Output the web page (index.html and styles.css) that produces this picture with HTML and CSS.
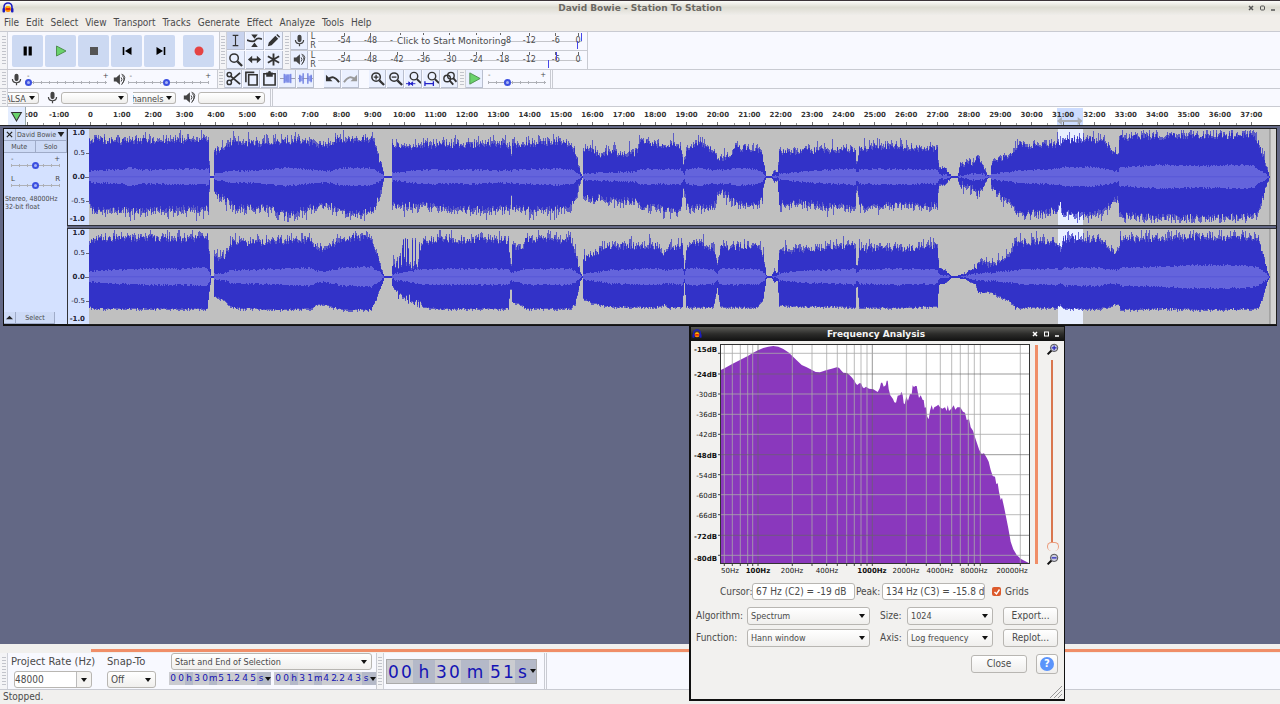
FILE: index.html
```html
<!DOCTYPE html>
<html lang="en">
<head>
<meta charset="utf-8">
<title>David Bowie - Station To Station</title>
<link rel="stylesheet" href="styles.css">
</head>
<body>
<svg class="defs" aria-hidden="true">
  <symbol id="logo" viewBox="0 0 12 12"><path d="M2 8V5a4 4 0 0 1 8 0v3" fill="none" stroke="#1c1cc0" stroke-width="1.6"/><circle cx="6" cy="7" r="3" fill="#f80"/><path d="M4 8l1-2 1 2 1-2 1 2" stroke="#d11" fill="none"/><path d="M4.500 5h3" stroke="#ffe000"/><rect x="0.500" y="6" width="2.500" height="4.500" rx="1" fill="#1c1cc0"/><rect x="9" y="6" width="2.500" height="4.500" rx="1" fill="#1c1cc0"/></symbol>
  <symbol id="mic" viewBox="0 0 16 16"><rect x="5.500" y="1" width="5" height="9" rx="2.500" fill="#444"/><path d="M3 7.500c0 6 10 6 10 0M8 12v3" fill="none" stroke="#444" stroke-width="1.500"/></symbol>
  <symbol id="spk" viewBox="0 0 16 16"><path d="M1 5.500h3L8.500 1.500v13L4 10.500H1z" fill="#444"/><path d="M10 5.500q2 2.500 0 5M11.500 3q4 5 0 10M10.500 1.500q8 2 0 13" fill="none" stroke="#444" stroke-width="1.200"/></symbol>
  <symbol id="mag" viewBox="0 0 16 16"><circle cx="6.500" cy="6.500" r="4.500" fill="none" stroke="#333" stroke-width="1.600"/><path d="M10 10l5 5" stroke="#333" stroke-width="2.400"/></symbol>
</svg>

<header class="titlebar">
  <svg class="logo"><use href="#logo"/></svg>
  <h1>David Bowie - Station To Station</h1>
  <span class="winbtns"><svg viewBox="0 0 30 8"><path d="M2 2l4 4M6 2L2 6" stroke="#555" stroke-width="1.500"/><rect x="13.500" y="2" width="4" height="4" rx="1" fill="none" stroke="#555"/><path d="M24 6h4" stroke="#555" stroke-width="1.500"/></svg></span>
</header>
<nav class="menu">
  <a href="#">File</a><a href="#">Edit</a><a href="#">Select</a><a href="#">View</a><a href="#">Transport</a><a href="#">Tracks</a><a href="#">Generate</a><a href="#">Effect</a><a href="#">Analyze</a><a href="#">Tools</a><a href="#">Help</a>
</nav>

<div class="bar bar1">
  <i class="grip"></i>
  <div class="transport">
    <button aria-label="Pause"><svg viewBox="0 0 16 16"><path d="M5.200 3.500v9M10.200 3.500v9" stroke="#000" stroke-width="3.200"/></svg></button>
    <button aria-label="Play"><svg viewBox="0 0 16 16"><path d="M3.500 3l9.500 5-9.500 5z" fill="#69d36b" stroke="#4f8f50"/></svg></button>
    <button aria-label="Stop"><svg viewBox="0 0 16 16"><path d="M4 4h8v8H4z" fill="#555"/></svg></button>
    <button aria-label="Skip to start"><svg viewBox="0 0 16 16"><path d="M4.500 4v8" stroke="#000" stroke-width="1.600"/><path d="M12.500 4v8L6 8z"/></svg></button>
    <button aria-label="Skip to end"><svg viewBox="0 0 16 16"><path d="M12.500 4v8" stroke="#000" stroke-width="1.600"/><path d="M4.500 4v8L11 8z"/></svg></button>
    <button class="rec" aria-label="Record"><svg viewBox="0 0 16 16"><circle cx="8" cy="8" r="4.500" fill="#e54343"/></svg></button>
  </div>
  <i class="grip edge"></i>
  <div class="tools">
    <button class="on" aria-label="Selection tool"><svg viewBox="0 0 16 16"><path d="M5 2.500h2.500L8 3.500l.5-1H11M5 13.500h2.500L8 12.500l.5 1H11M8 3v10" fill="none" stroke="#333" stroke-width="1.200"/></svg></button>
    <button aria-label="Envelope tool"><svg viewBox="0 0 16 16"><path d="M0 7.500q7 3 9 0t7-1" fill="none" stroke="#333" stroke-width="1.800"/><path d="M4.500 1.500h7L8 6zM4.500 15h7L8 10z" fill="#333"/></svg></button>
    <button aria-label="Draw tool"><svg viewBox="0 0 16 16"><path d="M2 14l1-4 7-7 3 3-7 7zM11 2l1-1 3 3-1 1z" fill="#333"/></svg></button>
    <button aria-label="Zoom tool"><svg viewBox="0 0 16 16"><use href="#mag"/></svg></button>
    <button aria-label="Time shift tool"><svg viewBox="0 0 16 16"><path d="M1 8l4.500-4v3h5V4L15 8l-4.500 4V9h-5v3z" fill="#333"/></svg></button>
    <button aria-label="Multi tool"><svg viewBox="0 0 16 16"><path d="M8 1.500v13M2 4.500l12 7M14 4.500l-12 7" stroke="#333" stroke-width="2"/></svg></button>
  </div>
  <i class="grip"></i>
  <div class="meters">
    <div class="meter">
      <button aria-label="Recording meter"><svg><use href="#mic"/></svg></button><span class="lr">L<br>R</span>
      <div class="scale"><span>-54</span><span>-48</span><span class="first">-</span><span></span><span></span><span></span><span class="last">8</span><span>-12</span><span>-6</span><span>0</span><b class="peak p1"></b><em>Click to Start Monitoring</em></div>
    </div>
    <div class="meter">
      <button aria-label="Playback meter"><svg><use href="#spk"/></svg></button><span class="lr">L<br>R</span>
      <div class="scale"><span>-54</span><span>-48</span><span>-42</span><span>-36</span><span>-30</span><span>-24</span><span>-18</span><span>-12</span><span>-6</span><span>0</span><b class="peak p2"></b></div>
    </div>
  </div>
</div>

<div class="bar bar2">
  <i class="grip"></i>
  <div class="mixer">
    <svg class="ic"><use href="#mic"/></svg>
    <label class="sl"><i>-</i><i>+</i><input type="range" aria-label="Recording volume" value="0"></label>
    <svg class="ic"><use href="#spk"/></svg>
    <label class="sl"><i>-</i><i>+</i><input type="range" aria-label="Playback volume" value="48"></label>
  </div>
  <i class="grip edge"></i>
  <div class="edit">
    <button aria-label="Cut"><svg viewBox="0 0 16 16"><circle cx="3.500" cy="3.800" r="2.300" fill="none" stroke="#333" stroke-width="1.600"/><circle cx="3.500" cy="12.200" r="2.300" fill="none" stroke="#333" stroke-width="1.600"/><path d="M5 5.500l10 8.500M5 10.500L15 2" stroke="#333" stroke-width="2"/></svg></button>
    <button aria-label="Copy"><svg viewBox="0 0 16 16"><path d="M2 12V1.500h9M5 4h9v11H5z" fill="none" stroke="#333" stroke-width="1.700"/></svg></button>
    <button aria-label="Paste"><svg viewBox="0 0 16 16"><path d="M2 3h12v12H2z" fill="none" stroke="#333" stroke-width="1.700"/><path d="M4.500 1.500h2a1.500 1.500 0 0 1 3 0h2V6h-7z" fill="#333"/></svg></button>
    <button aria-label="Trim"><svg viewBox="0 0 16 16"><path d="M0 8h16" stroke="#99a"/><path d="M4 3.500h8v9H4z" fill="#94a2ee"/><path d="M4.500 3v10M6.500 5v6M8.500 4v8M11.500 3v10" stroke="#6c7ce0"/></svg></button>
    <button aria-label="Silence"><svg viewBox="0 0 16 16"><path d="M0 8h16" stroke="#99a"/><path d="M1 5h4v6H1zM11 5h4v6h-4z" fill="#94a2ee"/><path d="M2 4v8M5.500 2.500v11M10.500 2.500v11M14 4v8" stroke="#6c7ce0" stroke-width="1.400"/></svg></button>
    <button class="gap" aria-label="Undo"><svg viewBox="0 0 16 16"><path d="M3 9q6-6 12 3" fill="none" stroke="#333" stroke-width="2"/><path d="M1 4v7h7z" fill="#333"/></svg></button>
    <button aria-label="Redo"><svg viewBox="0 0 16 16"><path d="M13 9Q7 3 1 12" fill="none" stroke="#999" stroke-width="2"/><path d="M15 4v7H8z" fill="#999"/></svg></button>
    <button class="gap" aria-label="Zoom in"><svg viewBox="0 0 16 16"><use href="#mag"/><path d="M4 6.500h5M6.500 4v5" stroke="#333" stroke-width="1.400"/></svg></button>
    <button aria-label="Zoom out"><svg viewBox="0 0 16 16"><use href="#mag"/><path d="M4 6.500h5" stroke="#333" stroke-width="1.400"/></svg></button>
    <button aria-label="Fit selection"><svg viewBox="0 0 16 16"><circle cx="8.500" cy="5.500" r="4" fill="none" stroke="#333" stroke-width="1.500"/><path d="M11.500 8.500L16 13" stroke="#333" stroke-width="2"/><path d="M0 13.500h10M3 11.500l2 2-2 2zM7 11.500l-2 2 2 2z" fill="#2222c8" stroke="#2222c8"/></svg></button>
    <button aria-label="Fit project"><svg viewBox="0 0 16 16"><circle cx="8.500" cy="5.500" r="4" fill="none" stroke="#333" stroke-width="1.500"/><path d="M11.500 8.500L16 13" stroke="#333" stroke-width="2"/><path d="M1 13.500h9M1 11v5M10 11v5" fill="none" stroke="#2222c8" stroke-width="1.400"/></svg></button>
    <button aria-label="Zoom toggle"><svg viewBox="0 0 16 16"><circle cx="9.500" cy="5" r="3.500" fill="none" stroke="#333" stroke-width="1.500"/><circle cx="5.500" cy="8" r="3.500" fill="none" stroke="#333" stroke-width="1.500"/><path d="M8 10l4 4.500M12 7.500l3.500 4" stroke="#333" stroke-width="2"/></svg></button>
  </div>
  <i class="grip"></i>
  <div class="edit"><button aria-label="Play at speed"><svg viewBox="0 0 16 16"><path d="M3 2l11 6-11 6z" fill="#69d36b" stroke="#4f8f50"/></svg></button></div>
  <label class="sl speed"><i>-</i><i>+</i><input type="range" aria-label="Playback speed" value="32"></label>
  <i class="end"></i>
</div>

<div class="bar bar3">
  <i class="grip"></i>
  <label class="combo cut w-host"><select aria-label="Audio host"><option>ALSA</option></select></label>
  <svg class="ic"><use href="#mic"/></svg>
  <label class="combo w-dev"><select aria-label="Recording device"><option></option></select></label>
  <label class="combo cut w-chan"><select aria-label="Recording channels"><option>Channels</option></select></label>
  <svg class="ic"><use href="#spk"/></svg>
  <label class="combo w-dev"><select aria-label="Playback device"><option></option></select></label>
  <i class="end"></i>
</div>

<div class="timeline">
  <div class="ticks" id="ticks"></div>
  <button class="pin" aria-label="Pinned play head"><svg viewBox="0 0 16 16"><path d="M2 3h12L8 13.500z" fill="#69d36b" stroke="#333" stroke-width="1.300"/></svg></button>
  <div class="range"><svg viewBox="0 0 26 8"><path d="M0 4l5-4v3h16V0l5 4-5 4V5H5v3z" fill="#a9adb5"/></svg></div>
</div>

<main class="desk">
  <section class="track">
    <aside class="tcp">
      <div class="row"><button class="x" aria-label="Close track"><svg viewBox="0 0 8 8"><path d="M1 1l6 6M7 1L1 7" stroke="#222" stroke-width="1.400"/></svg></button><button class="name">David Bowie<svg viewBox="0 0 8 6"><path d="M0 0h8L4 6z" fill="#222"/></svg></button></div>
      <div class="row"><button>Mute</button><button>Solo</button></div>
      <label class="sl"><i>-</i><i>+</i><input type="range" aria-label="Gain" value="49"></label>
      <label class="sl"><i>L</i><i>R</i><input type="range" aria-label="Pan" value="49"></label>
      <p>Stereo, 48000Hz<br>32-bit float</p>
      <div class="row foot"><button class="x" aria-label="Collapse"><svg viewBox="0 0 8 6"><path d="M0 5h8L4 1z" fill="#222"/></svg></button><button class="sel">Select</button></div>
    </aside>
    <div class="channels">
      <div class="chan">
        <div class="vr"><b>1.0</b><span>0.5</span><b>0.0</b><span>-0.5</span><b>-1.0</b></div>
        <svg class="wave" data-ch="0" viewBox="89 129 1187 96" preserveAspectRatio="none"></svg>
      </div>
      <div class="chan">
        <div class="vr"><b>1.0</b><span>0.5</span><b>0.0</b><span>-0.5</span><b>-1.0</b></div>
        <svg class="wave" data-ch="1" viewBox="89 229 1187 96" preserveAspectRatio="none"></svg>
      </div>
    </div>
  </section>
</main>

<div class="hscroll"><i></i></div>
<footer class="selbar">
  <i class="grip"></i>
  <div class="field rate"><label for="rate">Project Rate (Hz)</label><div class="combo entry"><input id="rate" value="48000"></div></div>
  <div class="field snap"><label for="snap">Snap-To</label><div class="combo"><select id="snap"><option>Off</option></select></div></div>
  <div class="field times">
    <div class="combo"><select aria-label="Selection mode"><option>Start and End of Selection</option></select></div>
    <div class="pair">
      <div class="time"><b>0</b><b>0</b><i>h</i><b>3</b><b>0</b><i>m</i><b>5</b><b>1</b><u>.</u><b>2</b><b>4</b><b>5</b><i>s</i></div>
      <div class="time"><b>0</b><b>0</b><i>h</i><b>3</b><b>1</b><i>m</i><b>4</b><b>2</b><u>.</u><b>2</b><b>4</b><b>3</b><i>s</i></div>
    </div>
  </div>
  <i class="grip edge"></i>
  <div class="time big"><b>0</b><b>0</b><i>h</i><b>3</b><b>0</b><i class="m">m</i><b>5</b><b>1</b><i class="s">s</i></div>
  <i class="end"></i>
</footer>
<div class="status">Stopped.</div>

<section class="dialog" role="dialog" aria-labelledby="fa">
  <header><svg class="logo"><use href="#logo"/></svg><h2 id="fa">Frequency Analysis</h2><span class="winbtns"><svg viewBox="0 0 30 8"><path d="M2 2l4 4M6 2L2 6" stroke="#fff" stroke-width="1.500"/><rect x="13.500" y="2" width="4" height="4" fill="none" stroke="#fff"/><path d="M24 6h4" stroke="#fff" stroke-width="1.500"/></svg></span></header>
  <div class="plot">
    <svg class="chart" id="chart" viewBox="691 341 340 236"></svg>
    <i class="vbar"></i>
    <div class="vzoom">
      <svg viewBox="0 0 16 16"><path d="M8 8l-6 6" stroke="#111" stroke-width="2.600"/><circle cx="10" cy="6" r="4.500" fill="#ccd" stroke="#333"/><path d="M7 6h6M10 3v6" stroke="#22b" stroke-width="1.500"/></svg>
      <i class="vline"></i>
      <svg viewBox="0 0 16 16"><path d="M8 8l-6 6" stroke="#111" stroke-width="2.600"/><circle cx="10" cy="6" r="4.500" fill="#ccd" stroke="#333"/><path d="M7 6h6" stroke="#22b" stroke-width="1.500"/></svg>
    </div>
  </div>
  <div class="readout">
    <label for="cur">Cursor:</label><input id="cur" value="67 Hz (C2) = -19 dB" readonly>
    <label for="peak">Peak:</label><input id="peak" value="134 Hz (C3) = -15.8 d" readonly>
    <label class="chk"><input type="checkbox" checked><svg viewBox="0 0 8 8"><path d="M1.500 4l2 2 3-4.500" fill="none" stroke="#fff" stroke-width="1.400"/></svg>Grids</label>
  </div>
  <div class="form">
    <label for="alg">Algorithm:</label><div class="combo"><select id="alg"><option>Spectrum</option></select></div>
    <label for="size">Size:</label><div class="combo"><select id="size"><option>1024</option></select></div>
    <button>Export...</button>
    <label for="fn">Function:</label><div class="combo"><select id="fn"><option>Hann window</option></select></div>
    <label for="axis">Axis:</label><div class="combo"><select id="axis"><option>Log frequency</option></select></div>
    <button>Replot...</button>
  </div>
  <div class="actions"><button class="close">Close</button><button class="help" aria-label="Help"><span>?</span></button></div>
  <svg class="size" viewBox="0 0 12 12"><path d="M0 12L12 0M4 12l8-8M8 12l4-4" stroke="#999"/></svg>
</section>
<script src="app.js"></script>
</body>
</html>
```

FILE: styles.css
```css
* { box-sizing: border-box; }
body {
  margin: 0; min-height: 100vh; display: flex; flex-direction: column;
  background: #f1f0ee; color: #4a4a4a; position: relative; overflow: hidden;
  font-family: "DejaVu Sans Condensed", "DejaVu Sans", sans-serif; font-size: 10px; line-height: 12px;
}
button, input, select { font: inherit; color: inherit; margin: 0; padding: 0; border: 0; background: none; border-radius: 0; }
h1, h2, p { margin: 0; }
i, em { font-style: normal; }
svg { display: block; flex: none; }
.defs { position: absolute; width: 0; height: 0; }
.logo { width: 12px; height: 12px; }

.titlebar {
  height: 15px; display: grid; grid-template-columns: 40px 1fr 40px; align-items: center;
  border-top: 1px solid #3b3338; background: linear-gradient(#fcfcf9 0, #dddcd2 45%, #efedea);
}
.titlebar .logo { margin-left: 2px; }
.titlebar h1, .dialog h2 { font: bold 9px/13px "DejaVu Sans", sans-serif; text-align: center; color: #6b6964; }
.winbtns { padding-right: 3px; }
.winbtns svg { width: 30px; height: 8px; margin-left: auto; }
.menu { display: flex; gap: 7px; height: 16px; padding: 2px 4px 0; background: #f1eeea; }
.menu a { color: #4a4a4a; text-decoration: none; }

.bar { display: flex; align-items: stretch; background: #f8f9ff; border-top: 1px solid #c9cbd2; }
.grip { flex: none; width: 8px; border-right: 1px solid #cfd1d8; background: repeating-linear-gradient(#c2c4cb 0 1px, transparent 1px 3px) center / 4px 80% no-repeat #f4f4f6; }
.edge { border-left: 1px solid #c9cbd2; }
.end { flex: none; width: 3px; border: solid #c9cbd2; border-width: 0 1px; }

.bar1 { height: 38px; }
.transport { display: flex; align-items: center; gap: 2px; padding: 0 5px 0 4px; }
.transport button { width: 31px; height: 32px; border-radius: 2px; background: #ccd9f2; display: grid; place-items: center; }
.transport svg { width: 16px; height: 16px; }
.transport .rec { margin-left: 6px; }
.tools { display: grid; grid-template-columns: repeat(3, 18px); gap: 1px; }
.tools button, .meter button, .edit button { background: #eaf0ff; border: solid #b9bfcf; border-width: 0 1px 1px 0; display: grid; place-items: center; }
.tools button.on { background: #c8d3ee; }
.tools svg { width: 15px; height: 15px; }
.meters { flex: none; width: 297px; display: grid; grid-template-rows: 1fr 1fr; border-right: 1px solid #c9cbd2; }
.meter { display: grid; grid-template-columns: 17px 10px 264px; border-bottom: 1px solid #c9cbd2; }
.meter button { width: 17px; }
.meter svg { width: 13px; height: 13px; }
.lr { font: 8px/9px "DejaVu Sans", sans-serif; text-align: center; }
.scale {
  position: relative; display: grid; grid-template-columns: repeat(9, 1fr) 18px; align-items: center; text-align: center;
  padding-left: 13px; margin-right: -5px; font: 8px/10px "DejaVu Sans", sans-serif;
  background: linear-gradient(#c4c5ca, #c4c5ca) 0 50% / 264px 1px no-repeat;
}
.scale span { min-height: 10px; }
.scale span::before { content: ""; display: block; width: 1px; height: 3px; margin: -3px auto 0; background: #666; }
.scale .first { text-align: left; padding-left: 6px; }
.scale .last { text-align: right; padding-right: 5px; }
.scale em { position: absolute; left: 79px; top: 3px; background: #f8f9ff; font-size: 9px; line-height: 12px; white-space: nowrap; }
.peak { position: absolute; width: 1px; height: 8px; background: #4646e8; }
.peak::after { content: ""; position: absolute; width: 1px; height: 8px; background: #4646e8; left: -4px; top: 8px; }
.p1 { left: 263px; top: 1px; } .p2 { left: 238px; top: 1px; } .p2::after { left: -8px; }

.bar2 { height: 19px; }
.mixer { display: flex; align-items: center; gap: 4px; padding: 0 6px 0 2px; width: 209px; }
.ic { width: 13px; height: 13px; }
.sl { flex: 1; display: grid; grid-template-columns: 1fr 1fr; font: 7px/6px "DejaVu Sans", sans-serif; }
.sl i:nth-child(2) { text-align: right; }
.sl input {
  appearance: none; grid-column: 1 / 3; width: 100%; height: 7px;
  background: linear-gradient(#aeb0b6, #aeb0b6) 0 3px / 100% 1px no-repeat, repeating-linear-gradient(90deg, #aeb0b6 0 1px, transparent 1px 8px) 0 2px / 100% 3px no-repeat;
}
.mixer .sl input { margin-left: -2px; }
.sl input::-webkit-slider-thumb { appearance: none; width: 7px; height: 7px; border: 2px solid #3c50e0; border-radius: 50%; background: #a8b4f4; }
.edit { display: flex; gap: 1px; }
.edit button { width: 17px; }
.edit svg { width: 15px; height: 15px; }
.edit .gap { margin-left: 9px; }
.speed { flex: none; width: 58px; margin: 2px 4px 2px 5px; }

.bar3 { height: 19px; align-items: center; border-bottom: 1px solid #c9cbd2; }
.bar3 .grip, .bar3 .end { align-self: stretch; }
.bar3 .combo { height: 12px; font-size: 9px; }
.bar3 .ic { margin: 0 2px 0 7px; }
.bar3 .end { margin-left: 5px; }
.combo { position: relative; display: block; border: 1px solid #b8b6b2; border-radius: 3px; background: linear-gradient(#fff, #f0efed); }
.combo::after { content: ""; position: absolute; right: 4px; top: 50%; margin-top: -2px; border: 3px solid transparent; border-top: 4px solid #111; border-bottom: 0; pointer-events: none; }
.combo select, .combo input { appearance: none; display: block; width: 100%; height: 100%; padding-left: 3px; outline: 0; }
.cut { overflow: hidden; border-left: 0; border-radius: 0 3px 3px 0; }
.cut select { margin-left: -6px; }
.w-host { width: 31px; } .w-dev { width: 67px; } .w-chan { width: 43px; margin-left: 5px; }
.w-chan select { margin-left: -10px; width: 50px; }
.bar3 .w-dev::after, .bar3 .cut::after { right: 3px; }

.timeline { position: relative; height: 19px; background: #fff; border-bottom: 1px solid #222; padding: 0 13px 0 12px; }
.ticks { position: relative; z-index: 1; height: 100%; display: grid; grid-template-columns: repeat(40, 1fr); font: bold 7px/16px "DejaVu Sans", sans-serif; color: #333; text-align: center; }
.ticks span { white-space: nowrap; background: linear-gradient(#777, #777) 50% 100% / 1px 3px no-repeat, linear-gradient(#999, #999) 0 100% / 1px 2px no-repeat; }
.pin { position: absolute; z-index: 2; left: 8px; top: 0; width: 18px; height: 18px; background: #e4edff; border-right: 1px solid #9aa; display: grid; place-items: center; }
.pin svg { width: 13px; height: 13px; }
.range { position: absolute; left: 82.600%; width: 2%; top: 1px; bottom: 0; background: #ccdcff; display: flex; align-items: flex-end; }
.range svg { width: 100%; height: 8px; }

.desk { flex: 1; background: #636885; padding: 2px 3px; }
.track { display: flex; height: 198px; border: 1px solid #111; border-width: 1px 1px 2px 1px; background: #d4e1ff; }
.tcp { width: 64px; display: flex; flex-direction: column; border-right: 1px solid #778; font-size: 7px; line-height: 8px; }
.tcp .row { display: flex; }
.tcp button { flex: 1; height: 12px; display: flex; align-items: center; justify-content: center; gap: 1px; border: solid #9fabc8; border-width: 0 1px 1px 0; background: #cddaf6; white-space: nowrap; }
.tcp .x { flex: none; width: 12px; }
.tcp .x svg { width: 7px; height: 7px; }
.tcp .name svg { width: 8px; height: 5px; }
.tcp .sl { flex: none; margin: 3px 7px 4px; }
.tcp p { padding: 2px 0 0 1px; white-space: nowrap; }
.tcp .foot { margin-top: auto; }
.tcp .sel { flex: none; width: 39px; }
.channels { flex: 1; display: grid; grid-template-rows: 1fr 1fr; gap: 4px; background: #636885; }
.chan { display: flex; background: #d4e1ff; outline: 1px solid #222c; min-height: 0; }
.vr { width: 21px; padding-right: 4px; display: grid; grid-template-rows: 8px 32px 16px 32px 4px; align-items: center; justify-items: end; font: 7px/8px "DejaVu Sans", sans-serif; color: #223; background: linear-gradient(90deg, transparent 17px, #667 17px) 0 48px / 100% 1px no-repeat, linear-gradient(90deg, transparent 18px, #667 18px) 0 24px / 100% 1px no-repeat, linear-gradient(90deg, transparent 18px, #667 18px) 0 72px / 100% 1px no-repeat; }
.wave { flex: 1; min-width: 0; height: 100%; background: #c0c0c0; shape-rendering: crispEdges; }

.hscroll { height: 9px; padding: 5px 0 0 91px; background: #f1f0ee; }
.hscroll i { display: block; height: 3px; background: #f08e68; }
.selbar { height: 37px; display: flex; background: #f8f9ff; border-bottom: 1px solid #c9cbd2; }
.field { display: flex; flex-direction: column; }
.field > label { font: 10px/17px "DejaVu Sans", sans-serif; }
.selbar .combo { height: 17px; font-size: 9px; }
.rate { width: 85px; margin-left: 3px; }
.rate .combo { margin: 1px 4px 0 3px; }
.entry { background: linear-gradient(90deg, #fff 61px, #bbb 61px 62px, #f4f3f1 62px); }
.rate .combo input { font-size: 10px; padding-left: 0; }
.snap { width: 49px; margin-left: 11px; }
.snap .combo { margin-top: 1px; }
.snap .combo select { font-size: 10px; }
.times { width: 207px; margin-left: 13px; }
.times .combo { width: 201px; margin-left: 2px; }
.pair { display: flex; gap: 3px; margin-top: 2px; }
.time { position: relative; display: flex; width: 102px; height: 13px; padding-right: 6px; color: #1414b4; font: 9px/13px "DejaVu Sans", sans-serif; background: #b4b9c8; text-align: center; }
.time b { font-weight: 400; width: 8px; background: #cbccd0; }
.time i { width: 8px; }
.time u { width: 0; text-decoration: none; text-indent: -2px; }
.time::after { content: ""; position: absolute; right: 0; top: 40%; border: 3px solid transparent; border-top: 4px solid #111; border-bottom: 0; }
.big { width: 151px; height: 25px; margin: 6px 7px 0 2px; border: 1px solid #aaa; font-size: 17px; line-height: 24px; padding: 0; }
.big b { width: 13px; } .big i { width: 22px; } .big i.m { width: 28px; } .big i.s { width: 15px; }
.status { height: 14px; padding: 1px 3px; }

.dialog { position: absolute; left: 689px; top: 326px; width: 376px; height: 375px; border: 2px solid #111; border-width: 1px 1px 2px 2px; background: #f2f1ef; display: flex; flex-direction: column; }
.dialog header { height: 14px; display: grid; grid-template-columns: 40px 1fr 43px; align-items: center; background: linear-gradient(#5a5a56, #2c2c2a 50%, #111); }
.dialog h2 { color: #f4f4f4; }
.dialog .logo { width: 10px; height: 10px; margin-left: 1px; }
.plot { display: flex; height: 236px; }
.chart { width: 340px; height: 236px; font: 7px "DejaVu Sans", sans-serif; fill: #111; }
.chart .bold { font-weight: bold; }
.vbar { width: 3px; height: 219px; margin: 4px 8px 0 4px; background: #f08e68; }
.vzoom { display: flex; flex-direction: column; align-items: center; padding-top: 2px; height: 225px; width: 12px; }
.vzoom svg { width: 13px; height: 13px; }
.vline { position: relative; flex: 1; width: 2px; margin: 4px 0; background: #d9764f; }
.vline::after { content: ""; position: absolute; left: -4px; bottom: -2px; width: 10px; height: 8px; border: 1px solid #eb9c7c; border-bottom: 0; border-radius: 5px; background: #f2f1ef; }
.readout { display: flex; align-items: center; padding-left: 29px; margin-top: 6px; }
.readout > input { flex: none; width: 103px; height: 17px; border: 1px solid #b8b6b2; border-radius: 3px; background: #fff; padding: 0 0 0 3px; }
.readout > label { width: 32px; white-space: nowrap; }
.readout > input + label { width: 26px; margin-left: 1px; }
.readout > .chk.chk { width: auto; margin-left: 7px; display: flex; gap: 4px; align-items: center; position: relative; }
.chk input { appearance: none; width: 9px; height: 9px; border-radius: 2px; background: #dc5a2c; }
.chk svg { position: absolute; left: 1px; top: 2px; width: 8px; height: 8px; }
.form { display: grid; grid-template-columns: 51px 123px 37px 86px 55px; row-gap: 4px; align-items: center; padding-left: 5px; margin-top: 7px; }
.form .combo { height: 18px; font-size: 9px; }
.form > .combo + label { padding-left: 10px; }
.form > button { margin-left: 10px; width: 55px; }
.form button, .actions button { height: 18px; border: 1px solid #b8b6b2; border-radius: 3px; background: linear-gradient(#fff, #efeeec); }
.actions { display: flex; justify-content: flex-end; align-items: center; gap: 9px; margin-top: 7px; padding-right: 6px; }
.actions .close { width: 56px; }
.actions .help { width: 22px; height: 20px; display: grid; place-items: center; }
.help span { width: 14px; height: 14px; border-radius: 50%; background: #5b94fb; color: #fff; font: bold 10px/14px "DejaVu Sans", sans-serif; }
.size { width: 12px; height: 12px; margin: auto 2px 1px auto; }
```

FILE: app.js
```js
// Time ruler
const ticks = document.getElementById('ticks');
for (let m = -2; m < 38; m++) {
  const s = document.createElement('span');
  s.textContent = m === 0 ? '0' : m + ':00';
  ticks.append(s);
}

// Envelope points: x, top, bottom, rms half height
const env = [
  [[89,140,207,5],[93,138,213,6],[120,139,213,7],[130,138,213,9],[140,139,213,7],[205,138,211,8],[208,139,212,8],[209,160,192,3],[210,176,178,0],[213,176,178,0],[214,150,197,3],[220,147,199,4],[227,143,203,5],[235,138,210,6],[250,142,210,6],[265,141,210,7],[285,139,217,9],[300,139,213,8],[320,142,208,6],[332,142,208,6],[334,138,212,7],[345,138,215,9],[358,137,217,9],[371,137,213,9],[375,145,209,7],[380,160,195,4],[384,176,178,0],[391.5,176,178,0],[392,143,208,4],[405,145,208,5],[412,147,208,6],[422,143,208,7],[440,143,210,7],[480,143,212,7],[500,142,211,6],[510,144,211,7],[511,156,198,6],[512,143,211,7],[545,141,212,8],[560,140,210,8],[570,142,209,7],[575,150,203,5],[580,172,182,1],[582,176,178,0],[583,149,200,3],[590,147,202,3],[600,153,200,4],[610,150,203,4],[620,153,203,5],[635,151,203,5],[640,141,209,8],[655,142,210,7],[680,144,213,8],[683,160,190,4],[684,160,190,3],[686,148,208,7],[695,140,210,9],[713,148,209,7],[718,157,194,7],[728,155,198,7],[735,146,205,8],[755,146,208,8],[762,152,200,5],[764,165,185,2],[766,176,178,0],[771,176,178,0],[774,170,182,1],[777,172,181,1],[779,150,207,3],[800,149,205,5],[830,148,209,7],[855,147,209,8],[856,162,190,4],[857,162,190,4],[859,147,209,7],[880,144,208,8],[937,147,208,7],[938,160,190,4],[939,168,186,2],[945,168,185,2],[951,176,178,0],[957,176,178,0],[960,163,188,1],[965,163,187,2],[973,160,190,3],[977,153,198,4],[982,165,190,3],[987,175,179,1],[990,175,178,1],[991,162,190,3],[1000,157,197,4],[1010,153,205,5],[1015,146,213,6],[1020,143,217,6],[1040,144,215,7],[1057,142,213,8],[1060,142,206,8],[1062,138,216,10],[1090,137,218,10],[1105,140,212,8],[1110,148,205,7],[1118,151,201,5],[1119,136,218,9],[1160,134,220,12],[1200,134,220,11],[1250,133,219,12],[1256,137,217,9],[1260,146,208,6],[1265,162,190,3],[1269,176,178,0]],
  [[89,243,308,5],[95,236,310,6],[140,236,310,8],[180,237,310,8],[207,235,310,9],[209,252,292,4],[211,276,278,0],[213,276,278,0],[214,256,297,3],[225,253,303,4],[232,241,309,7],[250,240,310,7],[280,239,311,8],[310,238,310,9],[315,244,307,6],[323,247,305,5],[334,242,309,7],[340,237,311,9],[371,235,311,10],[376,250,300,7],[382,272,284,2],[384,276,278,0],[391.5,276,278,0],[392,266,287,2],[397,260,294,4],[398,243,300,4],[420,241,308,7],[440,238,310,8],[508,238,310,8],[510,262,290,4],[511,262,290,4],[512,245,303,5],[522,246,307,7],[525,238,310,8],[570,238,310,8],[575,250,305,6],[580,272,282,1],[582,276,278,0],[583,256,300,3],[590,254,303,4],[600,248,306,5],[610,244,308,7],[655,244,309,8],[664,252,306,7],[669,245,309,7],[682,244,309,8],[684,268,284,3],[686,247,308,7],[692,240,309,9],[713,246,308,7],[717,262,290,4],[720,246,308,8],[757,244,309,8],[763,255,300,5],[766,275,279,1],[767,276,278,0],[771,276,278,0],[774,270,283,1],[777,272,281,1],[779,248,307,4],[800,248,308,6],[840,245,308,7],[855,244,309,8],[856,265,288,4],[857,265,288,4],[859,247,309,7],[900,247,309,8],[937,244,308,7],[938,255,295,4],[939,268,285,2],[945,270,284,2],[951,276,278,0],[957,276,278,0],[965,273,280,1],[975,267,285,3],[978,259,294,4],[990,263,293,4],[1000,260,298,5],[1010,255,303,6],[1015,241,309,7],[1055,240,309,8],[1061,248,306,7],[1063,237,310,9],[1100,238,310,9],[1110,248,308,7],[1118,249,305,7],[1120,237,311,9],[1160,237,310,10],[1200,235,311,12],[1250,236,310,11],[1258,237,309,9],[1262,250,300,6],[1267,270,283,2],[1269,276,278,0]]
];
let seed = 7;
const rnd = () => (seed = (seed * 16807) % 2147483647) / 2147483647;
const at = (pts, x) => {
  let i = 1;
  while (i < pts.length - 1 && pts[i][0] < x) i++;
  const a = pts[i - 1], b = pts[i], t = Math.max(0, Math.min(1, (x - a[0]) / (b[0] - a[0])));
  return [1, 2, 3].map(k => a[k] + (b[k] - a[k]) * t);
};
document.querySelectorAll('.wave').forEach(svg => {
  const ch = +svg.dataset.ch, mid = 177 + ch * 100, lo = mid - 47, hi = mid + 46;
  let solid = '', faint = '', rms = '';
  for (let x = 89; x < 1270; x++) {
    const [t, b, r] = at(env[ch], x);
    const big = mid - t > 12 ? 1 : (mid - t > 3 ? 0.3 : 0);
    const spiky = ch === 1 && x > 396 && x < 422 ? 5 : 1;
    const t0 = t + (rnd() * 7 - 1) * big * spiky, b0 = b - (ch ? rnd() * 2 * spiky : rnd() * 7 - 1) * big;
    const up = (rnd() < 0.22 ? 10 : 4) * rnd() * big, dn = (ch ? 2 : (rnd() < 0.22 ? 10 : 5)) * rnd() * big;
    const f0 = Math.max(lo, t0 - up), f1 = Math.min(hi, b0 + dn);
    solid += `M${x} ${Math.max(lo, t0).toFixed(1)}h1V${Math.min(hi, b0).toFixed(1)}h-1z`;
    faint += `M${x} ${f0.toFixed(1)}h1V${f1.toFixed(1)}h-1z`;
    if (r > 0) { const q = r + (rnd() - 0.5) * Math.min(r, 2); rms += `M${x} ${(mid - q).toFixed(1)}h1V${(mid + q).toFixed(1)}h-1z`; }
  }
  const y = 129 + ch * 100;
  svg.innerHTML = `<rect x="1057.500" y="${y}" width="25.500" height="96" fill="#e8efff"/><rect x="1270" y="${y}" width="6" height="96" fill="#d3d3d3"/><path d="M1270 ${y}v96" stroke="#888"/><path d="${faint}" fill="#3232c8" opacity="0.700"/><path d="${solid}" fill="#3232c8"/><path d="${rms}" fill="#6464dc"/><path d="M89 ${mid}H1269" stroke="#3232c8" stroke-width="1" opacity="0.250"/>`;
});

// Spectrum plot, drawn at three units per pixel
const curve = [[106,151],[120,144],[140,133],[165,120],[190,107],[203,99],[219,91],[235,84],[250,80],[265,78],[280,80],[295,87],[310,97],[322,108],[335,121],[350,135],[365,142],[381,150],[392,156],[405,157],[425,150],[440,146],[455,142],[462,143],[468,151],[475,158],[486,159],[494,166],[502,174],[508,182],[513,191],[517,195],[523,190],[528,190],[533,202],[537,205],[543,200],[552,206],[565,208],[578,216],[584,205],[588,188],[592,188],[596,200],[602,196],[605,182],[608,182],[611,208],[616,226],[624,237],[628,247],[633,248],[638,227],[646,225],[649,215],[653,225],[656,250],[659,253],[664,230],[669,242],[675,222],[680,222],[683,196],[687,202],[690,198],[695,198],[698,215],[702,234],[707,226],[713,240],[716,240],[719,263],[723,262],[727,290],[731,298],[735,272],[740,255],[744,270],[748,262],[755,258],[760,254],[765,262],[772,266],[780,262],[785,273],[788,256],[792,273],[800,265],[806,256],[811,269],[817,262],[826,262],[834,275],[840,278],[845,300],[852,298],[857,322],[864,332],[870,352],[876,370],[883,390],[890,402],[897,400],[905,413],[911,425],[917,450],[923,468],[930,470],[934,492],[938,490],[942,515],[947,540],[951,533],[957,560],[963,590],[970,625],[977,665],[985,688],[995,705],[1008,717],[1033,730]];
const vx = [118,142,166,188,203,219,322,381,425,457,485,508,528,546,562,664,724,766,800,826,850,868,886,1006];
const hy = [100,162,222,283,343,404,464,524,584,646,706];
const dark = [219, 562, 162, 404, 646];
const X = v => 685 + v / 3, Y = v => 320 + v / 3;
const line = (x1, y1, x2, y2, c) => `<path d="M${x1.toFixed(1)} ${y1.toFixed(1)}L${x2.toFixed(1)} ${y2.toFixed(1)}" stroke="${c}"/>`;
let g = '<rect x="720.500" y="344.500" width="309" height="219" fill="#fff"/>';
g += `<path d="M720.500 563.500 ${curve.map(p => 'L' + X(p[0]).toFixed(1) + ' ' + Y(p[1]).toFixed(1)).join('')}z" fill="#8a38bd"/>`;
vx.forEach(v => { const c = dark.includes(v) ? '#666a' : '#aaac'; g += line(X(v), 344, X(v), 563, c) + line(X(v), 563, X(v), 566, '#444'); });
hy.forEach(v => { const c = dark.includes(v) ? '#666a' : '#aaac'; g += line(720, Y(v), 1029, Y(v), c) + line(718, Y(v), 720, Y(v), '#444'); });
g += '<rect x="720.500" y="344.500" width="309" height="219" fill="none" stroke="#333"/>';
[[-15,349,1],[-24,374,1],[-30,394],[-36,414],[-42,434],[-48,455,1],[-54,475],[-60,495],[-66,515],[-72,536,1],[-80,558,1]].forEach(([d, y, b]) => {
  g += `<text x="717" y="${y + 3}" text-anchor="end"${b ? ' class="bold"' : ''}>${d}dB</text>`;
});
[['50Hz',730],['100Hz',758,1],['200Hz',792],['400Hz',827],['1000Hz',872,1],['2000Hz',906],['4000Hz',940],['8000Hz',974],['20000Hz',1012]].forEach(([s, x, b]) => {
  g += `<text x="${x}" y="573" text-anchor="middle"${b ? ' class="bold"' : ''}>${s}</text>`;
});
document.getElementById('chart').innerHTML = g;
```
